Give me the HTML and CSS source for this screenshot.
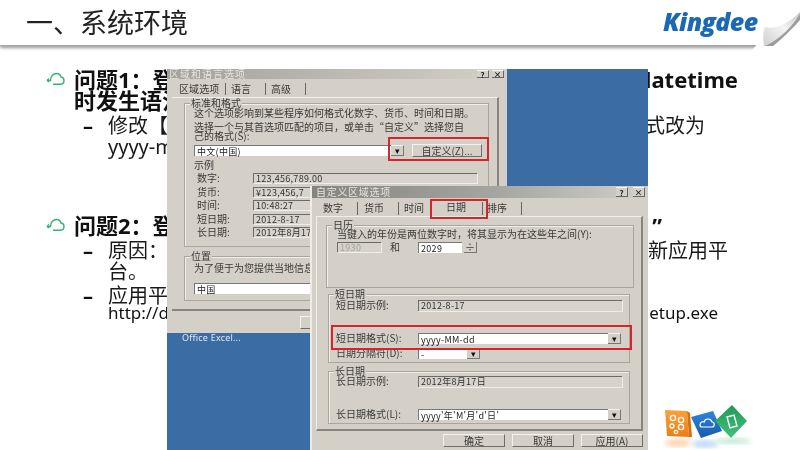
FILE: index.html
```html
<!DOCTYPE html>
<html lang="zh-CN">
<head>
<meta charset="utf-8">
<title>系统环境</title>
<link rel="stylesheet" href="styles.css">
</head>
<body>
<div class="slide">
  <header class="top">
    <h1 class="title">一、系统环境</h1>
    <span class="logo">Kingdee</span>
    <svg class="curl" width="50" height="52" viewBox="0 0 50 52">
      <defs><linearGradient id="cg" x1="0" y1="1" x2="1" y2="0"><stop offset="0" stop-color="#cfcfcf"/><stop offset=".55" stop-color="#f4f4f4"/><stop offset="1" stop-color="#c4c4c4"/></linearGradient></defs>
      <polygon points="0,52 50,52 50,0" fill="#fff"/>
      <path d="M14 46 C13 38 13 32 15 27 C27 30 40 22 50 12 L50 19 C42 30 30 40 22 46 Z" fill="url(#cg)"/>
      <path d="M15 46 L23 46 C32 39 42 29 50 20 L50 14 C42 27 30 39 15 46 Z" fill="#9c9c9c"/>
    </svg>
  </header>
  <main class="body">
    <section class="issue issue-one">
      <svg class="cloud" width="19" height="14" viewBox="0 0 19 14"><path d="M1 8.5 H4.5 C4.5 4 7.5 1.5 10.5 1.5 C13 1.5 14.5 3 15 5 C17 5.2 18 6.8 18 8.5 C18 10.6 16.5 12.2 14.5 12.2 H7" fill="none" stroke="#35b07c" stroke-width="1.4"/><path d="M1 8.5 L3 6.5 M1 8.5 L3 10" stroke="#35b07c" stroke-width="1.2" fill="none"/></svg>
      <div class="issue-text">
        <p class="q split"><span>问题1：登</span><span>datetime</span></p>
        <p class="q">时发生语法</p>
        <div class="sub first"><span class="dash">–</span><div class="sub-text">
          <p class="a split wide"><span>修改【</span><span>式改为</span></p>
          <p class="a latin">yyyy-mm</p>
        </div></div>
      </div>
    </section>
    <section class="issue issue-two">
      <svg class="cloud" width="19" height="14" viewBox="0 0 19 14"><path d="M1 8.5 H4.5 C4.5 4 7.5 1.5 10.5 1.5 C13 1.5 14.5 3 15 5 C17 5.2 18 6.8 18 8.5 C18 10.6 16.5 12.2 14.5 12.2 H7" fill="none" stroke="#35b07c" stroke-width="1.4"/><path d="M1 8.5 L3 6.5 M1 8.5 L3 10" stroke="#35b07c" stroke-width="1.2" fill="none"/></svg>
      <div class="issue-text">
        <p class="q split narrow"><span>问题2：登</span><span>”</span></p>
        <div class="sub"><span class="dash">–</span><div class="sub-text">
          <p class="a split wide2"><span>原因：</span><span>新应用平</span></p>
          <p class="a">台。</p>
        </div></div>
        <div class="sub second"><span class="dash">–</span><div class="sub-text">
          <p class="a">应用平台</p>
          <p class="url split wide3"><span>http://d</span><span>etup.exe</span></p>
        </div></div>
      </div>
    </section>
  </main>

  <div class="desktop"></div>
  <div class="taskitem">Office Excel...</div>

  <div class="dialog d1">
    <div class="bar"><span class="bar-title">区域和语言选项</span><span class="bar-btns"><i>?</i><i>×</i></span></div>
    <div class="tabs t1"><span class="tab w50">区域选项</span><span class="tab w40">语言</span><span class="tab w40">高级</span></div>
    <div class="panel p1">
      <div class="group g1">
        <span class="legend">标准和格式</span>
        <p class="line l1">这个选项影响到某些程序如何格式化数字、货币、时间和日期。</p>
        <p class="line l2">选择一个与其首选项匹配的项目，或单击“自定义”选择您自</p>
        <p class="line l3">己的格式(S):</p>
        <div class="pick-row">
          <span class="input w197">中文(中国)</span><span class="arrow">▾</span><span class="btn custom">自定义(Z)...</span>
        </div>
        <p class="line l4">示例</p>
        <div class="sample"><span class="lab">数字:</span><span class="field f224">123,456,789.00</span></div>
        <div class="sample"><span class="lab">货币:</span><span class="field f224">¥123,456,7</span></div>
        <div class="sample"><span class="lab">时间:</span><span class="field f224">10:48:27</span></div>
        <div class="sample"><span class="lab">短日期:</span><span class="field f224">2012-8-17</span></div>
        <div class="sample"><span class="lab">长日期:</span><span class="field f224">2012年8月17</span></div>
      </div>
      <div class="group g2">
        <span class="legend">位置</span>
        <p class="line l1">为了便于为您提供当地信息</p>
        <div class="pick-row loc"><span class="input w280">中国</span></div>
      </div>
    </div>
    <div class="foot"><span class="btn stub"></span></div>
    <div class="red r1"></div>
  </div>

  <div class="dialog d2">
    <div class="bar tall"><span class="bar-title">自定义区域选项</span><span class="bar-btns big"><i>?</i><i>×</i></span></div>
    <div class="tabs t2"><span class="tab tw39">数字</span><span class="tab tw41">货币</span><span class="tab tw40">时间</span><span class="tab sel">日期</span><span class="tab tw39b">排序</span></div>
    <div class="panel p2">
      <div class="group g3">
        <span class="legend">日历</span>
        <p class="line l1">当键入的年份是两位数字时，将其显示为在这些年之间(Y):</p>
        <div class="cal-row"><span class="field dim w44">1930</span><span class="he">和</span><span class="input w44">2029</span><span class="spin">÷</span></div>
      </div>
      <div class="group g4">
        <span class="legend">短日期</span>
        <div class="fmt first-row"><span class="fl">短日期示例:</span><span class="field w204">2012-8-17</span></div>
        <div class="fmt gap22"><span class="fl">短日期格式(S):</span><span class="input w190">yyyy-MM-dd</span><span class="arrow">▾</span></div>
        <div class="fmt gap4"><span class="fl">日期分隔符(D):</span><span class="input w49">-</span><span class="arrow">▾</span></div>
      </div>
      <div class="group g5">
        <span class="legend">长日期</span>
        <div class="fmt first-row"><span class="fl">长日期示例:</span><span class="field w204">2012年8月17日</span></div>
        <div class="fmt gap22"><span class="fl">长日期格式(L):</span><span class="input w190">yyyy'年'M'月'd'日'</span><span class="arrow">▾</span></div>
      </div>
    </div>
    <div class="foot f2"><span class="btn wide-btn">确定</span><span class="btn wide-btn">取消</span><span class="btn wide-btn">应用(A)</span></div>
    <div class="red r2"></div>
    <div class="red r3"></div>
  </div>

  <svg class="cubes" width="100" height="50" viewBox="0 0 100 50">
    <defs>
      <filter id="bl"><feGaussianBlur stdDeviation="2.5"/></filter>
      <linearGradient id="og" x1="0" y1="0" x2="0" y2="1"><stop offset="0" stop-color="#f9a23a"/><stop offset="1" stop-color="#ee7d14"/></linearGradient>
      <linearGradient id="bg" x1="0" y1="0" x2="0" y2="1"><stop offset="0" stop-color="#2f86dc"/><stop offset="1" stop-color="#1459ae"/></linearGradient>
      <linearGradient id="gg" x1="0" y1="0" x2="0" y2="1"><stop offset="0" stop-color="#1f9a58"/><stop offset="1" stop-color="#44c07c"/></linearGradient>
    </defs>
    <g opacity=".55">
      <ellipse cx="17" cy="43" rx="13" ry="4" fill="#f7b26a" filter="url(#bl)"/>
      <ellipse cx="44" cy="44" rx="13" ry="4" fill="#8dbdee" filter="url(#bl)"/>
      <ellipse cx="72" cy="41" rx="18" ry="3" fill="#8ed9ae" filter="url(#bl)"/>
    </g>
    <path d="M4 10 L26 11 L28 37 L6 36 Z" fill="url(#og)"/>
    <path d="M26 11 L29 13 L31 37 L28 37 Z" fill="#d96f10"/>
    <g fill="none" stroke="#fff" stroke-width="1.3"><circle cx="12" cy="18" r="2.6"/><circle cx="20" cy="20" r="2.6"/><circle cx="11" cy="26" r="2"/><circle cx="20" cy="27" r="2.6"/><circle cx="15" cy="32" r="1.7"/></g>
    <path d="M30 17 L52 11 L61 31 L40 38 Z" fill="url(#bg)"/>
    <path d="M39 25 C39 22 42 21 43 22 C44 18 50 18 51 22 C54 22 54 27 51 27 H41 C39 27 39 25 39 25 Z" fill="none" stroke="#fff" stroke-width="1.2"/>
    <path d="M54 21 L71 5 L86 21 L70 38 Z" fill="url(#gg)"/>
    <path d="M66 17 L73 15 L76 26 L69 28 Z" fill="none" stroke="#fff" stroke-width="1.4"/>
  </svg>
</div>
</body>
</html>
```

FILE: styles.css
```css
* { box-sizing: border-box; }
html, body { margin: 0; padding: 0; }
body { width: 800px; height: 450px; overflow: hidden; background: #fff; }
p { margin: 0; }
.slide {
  position: relative;
  width: 800px;
  height: 450px;
  overflow: hidden;
  background: #fff;
  color: #111;
  font-family: "Noto Sans", "Noto Sans CJK SC", sans-serif;
}

/* header */
.top {
  position: relative;
  height: 46px;
  background: #fff;
  display: flex;
  align-items: center;
  padding-left: 26px;
  border-bottom: 1px solid #a8a8a8;
  box-shadow: 0 2px 3px rgba(0, 0, 0, .4);
}
.title {
  margin: 0;
  font-size: 27px;
  line-height: 46px;
  font-weight: 400;
  color: #222;
  filter: blur(.3px);
}
.logo {
  position: absolute;
  left: 663px;
  top: 3px;
  font-family: "Open Sans", sans-serif;
  font-style: italic;
  font-weight: 800;
  font-size: 25px;
  line-height: 36px;
  letter-spacing: -.6px;
  color: #1b69b4;
  filter: blur(.3px);
}
.curl { position: absolute; right: 0; top: 0; }

/* slide text */
.body { padding: 23px 0 0 46px; filter: blur(.2px); }
.issue { display: flex; align-items: flex-start; }
.issue-two { margin-top: 58px; }
.cloud { flex: none; margin-top: 3px; margin-right: 9px; }
.issue-text { display: flex; flex-direction: column; }
.q { font-size: 22px; line-height: 21px; font-weight: 700; height: 21px; white-space: nowrap; }
.split { display: flex; justify-content: space-between; width: 664px; }
.narrow { width: 588px; }
.sub { display: flex; margin-left: 9px; margin-top: 4px; }
.sub.second { margin-top: 3px; }
.dash { width: 25px; font-size: 20px; line-height: 21px; font-weight: 700; }
.sub-text { display: flex; flex-direction: column; }
.a { font-size: 20px; line-height: 21px; height: 21px; white-space: nowrap; color: #1a1a1a; }
.wide { width: 597px; }
.wide2 { width: 620px; }
.wide3 { width: 610px; margin-top: -2px; }
.url { font-size: 17px; line-height: 18px; height: 18px; white-space: nowrap; }

/* captured desktop */
.desktop {
  position: absolute;
  left: 167px;
  top: 69px;
  width: 481px;
  height: 381px;
  background: #3b6ca3;
}
.taskitem {
  position: absolute;
  left: 182px;
  top: 332px;
  font-size: 9px;
  line-height: 12px;
  color: #dfe9f5;
  letter-spacing: .2px;
  filter: blur(.3px);
}
.dialog {
  position: absolute;
  background: #d4d0c8;
  font-family: "Noto Sans CJK SC", "Noto Sans", sans-serif;
  font-size: 10px;
  line-height: 10px;
  color: #3a3a38;
  display: flex;
  flex-direction: column;
}
.d1 { left: 167px; top: 69px; width: 340px; height: 264px; }
.d2 { left: 310px; top: 186px; width: 338px; height: 264px; border-left: 2px solid #ecebe6; }
.dialog p, .dialog span { white-space: nowrap; }
.d1 > *:not(.red), .d2 > *:not(.red) { filter: blur(.35px); }

.bar {
  height: 10px;
  flex: none;
  display: flex;
  justify-content: space-between;
  align-items: center;
  padding: 0 3px 0 2px;
  background: linear-gradient(90deg, #a3a19b, #c4c2bb 70%, #d4d0c8);
}
.bar.tall { height: 12px; background: linear-gradient(90deg, #85857f, #a6a6a1 55%, #d0cfc9); }
.bar-title { color: #e6e5e0; font-size: 10px; letter-spacing: 1px; }
.tall .bar-title { letter-spacing: .7px; padding-left: 2px; }
.bar-btns { display: flex; gap: 3px; }
.bar-btns i {
  width: 12px;
  height: 8px;
  font-style: normal;
  font-size: 8px;
  line-height: 8px;
  font-weight: 700;
  text-align: center;
  color: #222;
  background: #d4d0c8;
  border-right: 1px solid #666;
  border-bottom: 1px solid #666;
  border-top: 1px solid #f4f4f0;
}
.bar-btns.big { gap: 5px; }
.big i { height: 10px; line-height: 10px; }

.tabs { display: flex; flex: none; height: 18px; padding: 4px 0 0 9px; }
.tab { height: 12px; line-height: 11px; text-align: left; padding-left: 3px; border-right: 1px solid #666; letter-spacing: .1px; }
.w50 { width: 50px; }
.w40 { width: 40px; padding-left: 5px; }
.t2 { height: 18px; padding: 4px 0 0 7px; }
.t2 .tab { height: 13px; line-height: 12px; }
.tw39 { width: 39px; padding-left: 4px; }
.tw41 { width: 41px; padding-left: 6px; }
.tw40 { width: 40px; padding-left: 5px; border-right: none; }
.tab.sel { width: 44px; padding-left: 7px; line-height: 10px; }
.tw39b { width: 39px; padding-left: 4px; }

.panel {
  flex: none;
  border-top: 1px solid #f0efea;
  border-right: 2px solid #87857f;
  border-bottom: 2px solid #87857f;
}
.p1 { width: 327px; height: 214px; margin-left: 5px; padding: 5px 0 0 12px; }
.p2 { width: 327px; height: 215px; margin-left: 4px; padding: 8px 0 0 9px; border-left: 1px solid #f0efea; }

.group { position: relative; width: 305px; border: 1px solid #a8a69f; box-shadow: inset 1px 1px 0 #efeee9; }
.legend { position: absolute; left: 5px; top: -6px; height: 9px; line-height: 9px; padding: 0 1px; background: #d4d0c8; }
.g1 { height: 144px; padding: 4px 0 0 9px; }
.g2 { height: 45px; margin-top: 9px; padding: 6px 0 0 9px; }
.g3 { width: 308px; height: 63px; padding: 3px 0 0 10px; }
.g4 { margin-left: 2px; width: 302px; height: 69px; margin-top: 6px; padding: 5px 0 0 7px; }
.g5 { margin-left: 2px; width: 302px; height: 53px; margin-top: 8px; padding: 4px 0 0 7px; }
.line { height: 10px; letter-spacing: 0; }
.g1 .l2 { margin-top: 4px; }
.g1 .l3 { margin-top: -1px; height: 9px; line-height: 9px; }
.g1 .l4 { margin-top: 4px; }
.pick-row { display: flex; align-items: flex-start; margin-top: 5px; height: 11px; }
.pick-row.loc { margin-top: 10px; }
.input {
  display: block;
  height: 11px;
  background: #fff;
  padding-left: 2px;
  line-height: 11px;
  border-top: 1px solid #777;
  border-left: 1px solid #777;
  font-size: 9px;
  letter-spacing: .3px;
  color: #222;
}
.w197 { width: 197px; }
.w280 { width: 280px; }
.arrow {
  flex: none;
  width: 13px;
  height: 11px;
  font-size: 9px;
  line-height: 10px;
  text-align: center;
  color: #111;
  background: #d4d0c8;
  border-right: 1px solid #777;
  border-bottom: 1px solid #777;
  border-top: 1px solid #f2f2ee;
}
.btn {
  display: block;
  height: 13px;
  text-align: center;
  line-height: 12px;
  background: #d4d0c8;
  border-right: 1px solid #6f6d68;
  border-bottom: 1px solid #6f6d68;
  border-top: 1px solid #f2f2ee;
  border-left: 1px solid #f2f2ee;
}
.custom { width: 70px; margin-left: 8px; margin-top: -1px; }
.sample { display: flex; height: 10px; margin-top: 3.6px; padding-left: 3px; }
.l4 + .sample { margin-top: 3px; }
.lab { width: 56px; }
.field {
  display: block;
  height: 10px;
  line-height: 10px;
  padding-left: 2px;
  font-size: 9px;
  letter-spacing: .3px;
  color: #333;
  background: #d6d3cc;
  border-top: 1px solid #6d6b66;
  border-left: 1px solid #6d6b66;
  box-shadow: 1px 1px 0 #eeede8;
}
.f224 { width: 224px; }
.foot { flex: 1; padding: 5px 0 0 133px; }
.stub { width: 60px; }
.f2 { display: flex; gap: 7px; padding: 3px 0 0 131px; }
.wide-btn { width: 62px; }
.cal-row { display: flex; align-items: flex-start; margin-top: 3px; }
.dim { color: #a3a19b; }
.w44 { width: 44px; }
.he { width: 37px; padding-left: 9px; }
.spin { width: 13px; height: 11px; margin-left: 2px; text-align: center; background: #d4d0c8; border-right: 1px solid #777; border-bottom: 1px solid #777; }
.fmt { display: flex; height: 11px; }
.fl { width: 82px; }
.first-row { margin-top: 0; }
.gap22 { margin-top: 22px; }
.gap4 { margin-top: 4px; }
.w204 { width: 204px; height: 11px; }
.w190 { width: 190px; }
.w49 { width: 49px; }

.red { position: absolute; border: 2px solid #d6232c; }
.r1 { left: 221px; top: 68px; width: 101px; height: 24px; }
.r2 { left: 118px; top: 13px; width: 58px; height: 20px; }
.r3 { left: 19px; top: 139px; width: 301px; height: 25px; }

.cubes { position: absolute; left: 661px; top: 400px; }
```
